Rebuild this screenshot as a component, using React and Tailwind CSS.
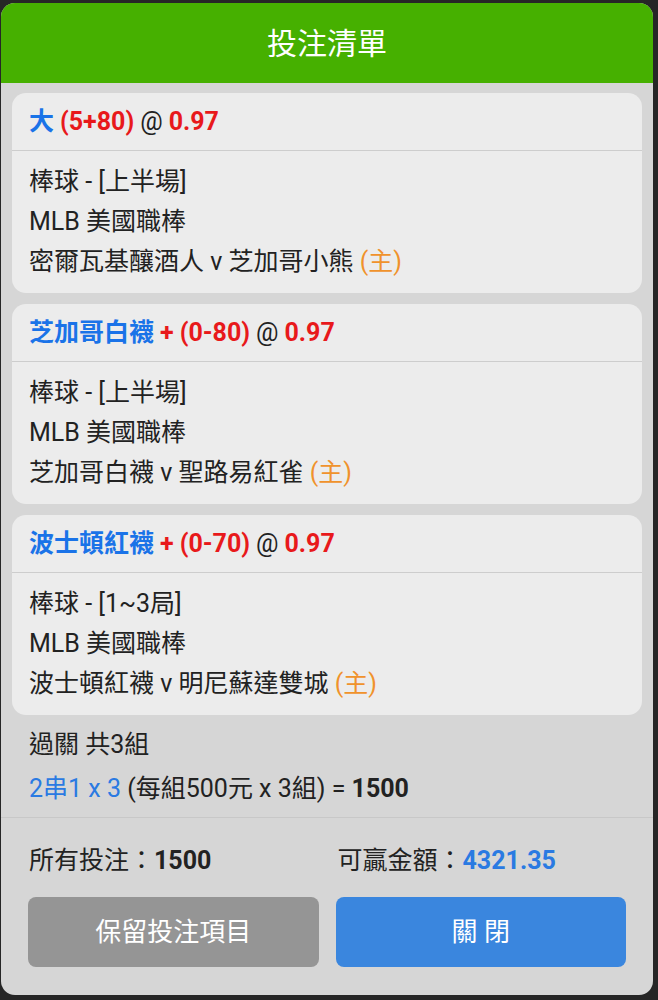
import React from "react";

const bets = [
  {
    team: "大",
    sign: "",
    line: "(5+80)",
    odds: "0.97",
    sport: "棒球 - [上半場]",
    league: "MLB 美國職棒",
    match: "密爾瓦基釀酒人 v 芝加哥小熊",
  },
  {
    team: "芝加哥白襪",
    sign: "+",
    line: "(0-80)",
    odds: "0.97",
    sport: "棒球 - [上半場]",
    league: "MLB 美國職棒",
    match: "芝加哥白襪 v 聖路易紅雀",
  },
  {
    team: "波士頓紅襪",
    sign: "+",
    line: "(0-70)",
    odds: "0.97",
    sport: "棒球 - [1~3局]",
    league: "MLB 美國職棒",
    match: "波士頓紅襪 v 明尼蘇達雙城",
  },
];

const font = { fontFamily: 'Roboto, "Noto Sans CJK TC", sans-serif' };

export default function App() {
  return (
    <div className="w-[658px] h-[1000px] bg-[#262626] pt-[3px] pl-[1px]" style={font}>
      <div className="w-[652px] h-[992px] rounded-[14px] overflow-hidden bg-[#d6d6d6] flex flex-col">
        {/* HEADER */}
        <div className="h-[80px] bg-[#46b000] flex items-center justify-center text-white text-[30px]">
          投注清單
        </div>

        {/* BET CARDS */}
        <div className="px-[11px] pt-[10px] flex flex-col gap-[11px]">
          {bets.map((b, i) => (
            <div key={i} className="bg-[#ececec] rounded-[14px] text-[#222]">
              <div className="h-[58px] px-[17px] flex items-center gap-[6px] text-[25px] font-bold border-b border-[#cdcdcd]">
                <span className="text-[#1a73e8]">{b.team}</span>
                <span className="text-[#e8191b]">
                  {b.sign && <span className="mr-[6px]">{b.sign}</span>}
                  {b.line}
                </span>
                <span className="font-normal text-[#222]">@</span>
                <span className="text-[#e8191b]">{b.odds}</span>
              </div>
              <div className="px-[17px] pt-[11px] pb-[11px] text-[25px] leading-[40px]">
                <div>{b.sport}</div>
                <div>{b.league}</div>
                <div>
                  {b.match} <span className="text-[#f0922b]">(主)</span>
                </div>
              </div>
            </div>
          ))}
        </div>

        {/* PARLAY INFO */}
        <div className="px-[28px] pt-[8px] pb-[6px] text-[25px] leading-[44px] text-[#222] border-b border-[#c8c8c8]">
          <div>過關 共3組</div>
          <div>
            <span className="text-[#2a7ae2]">2串1 x 3</span> (每組500元 x 3組) ={" "}
            <span className="font-bold">1500</span>
          </div>
        </div>

        {/* TOTALS + BUTTONS */}
        <div className="px-[27px] pt-[26px] flex flex-col">
          <div className="grid grid-cols-2 gap-[17px] text-[25px] leading-[34px] text-[#222]">
            <div className="pl-[1px]">
              所有投注：<span className="font-bold">1500</span>
            </div>
            <div className="pl-[2px]">
              可贏金額：<span className="font-bold text-[#2a7ae2]">4321.35</span>
            </div>
          </div>
          <div className="grid grid-cols-2 gap-[17px] mt-[19px]">
            <button className="h-[70px] rounded-[8px] bg-[#959595] text-white text-[26px]">
              保留投注項目
            </button>
            <button className="h-[70px] rounded-[8px] bg-[#3a86de] text-white text-[26px]">
              關 閉
            </button>
          </div>
        </div>
      </div>
    </div>
  );
}
